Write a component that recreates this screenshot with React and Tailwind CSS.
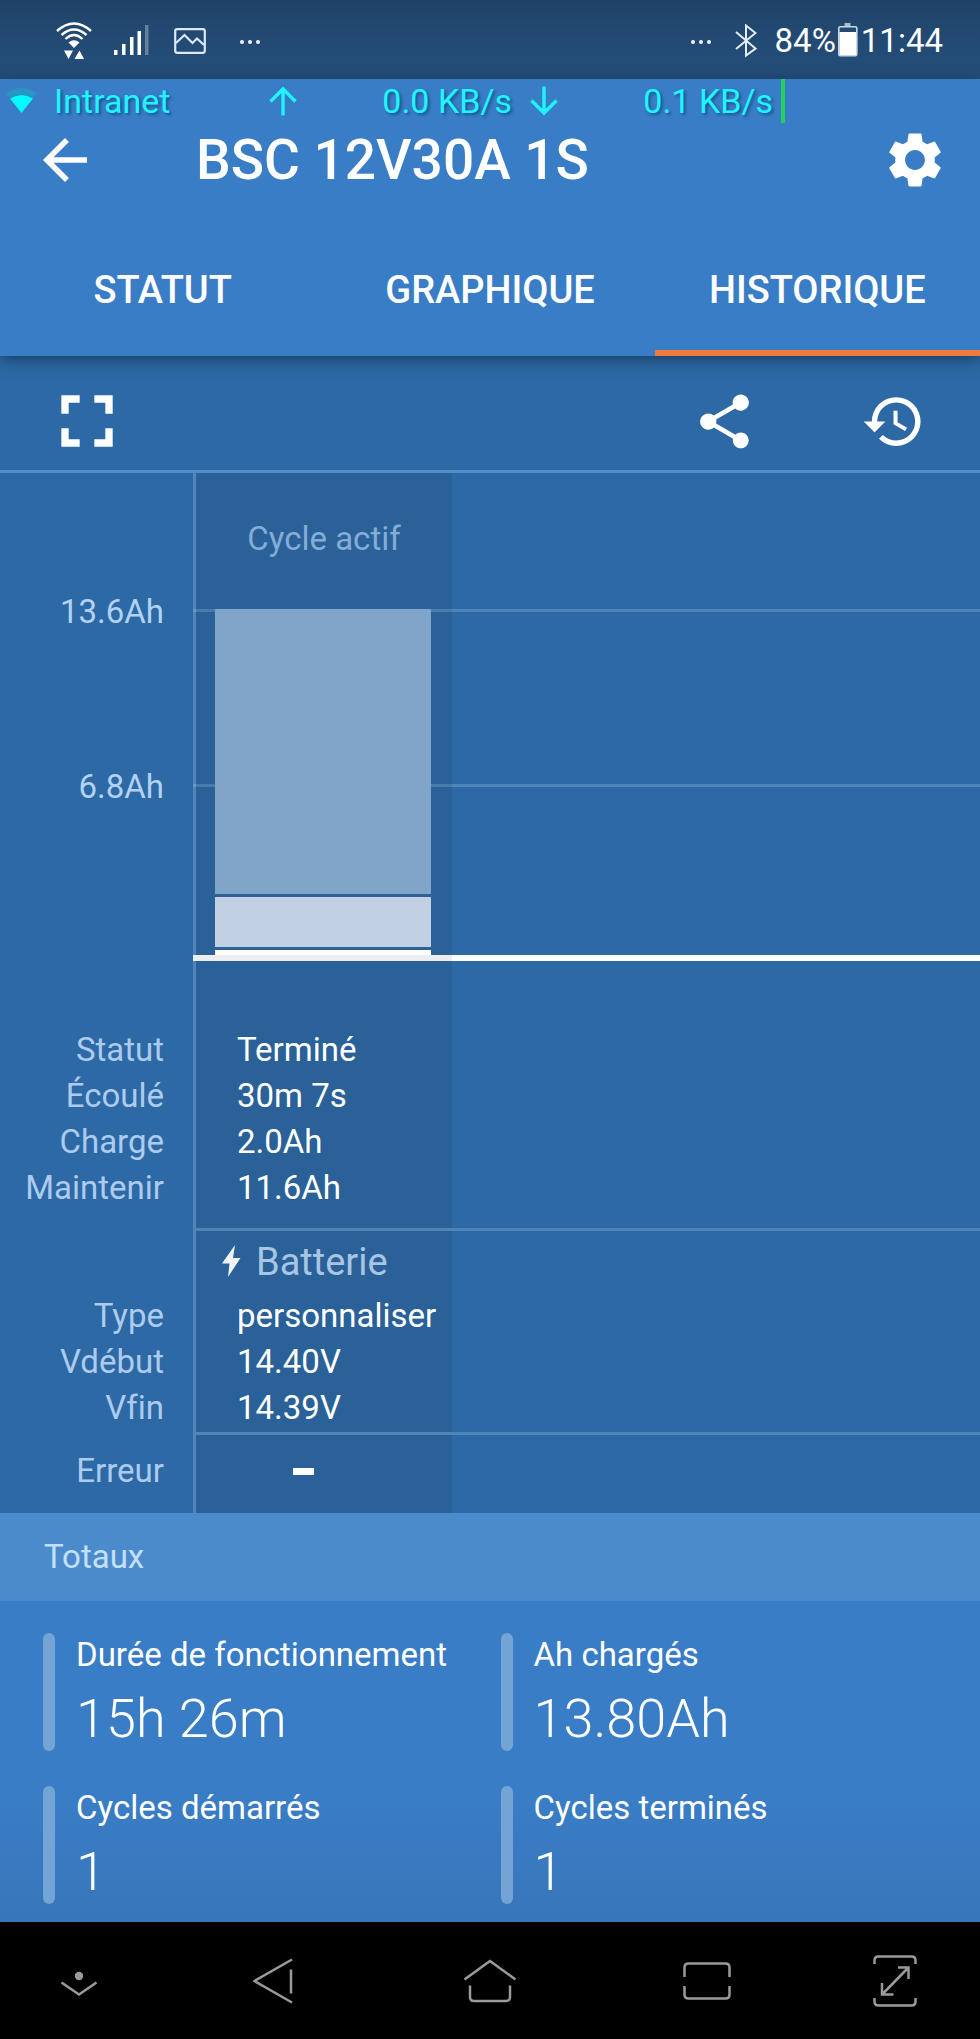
import { useState } from 'react'
import { MdArrowBack, MdFullscreen, MdHistory, MdSettings, MdShare } from 'react-icons/md'

const TABS = ['STATUT', 'GRAPHIQUE', 'HISTORIQUE']

const CYCLE_ROWS = [
  ['Statut', 'Terminé'],
  ['Écoulé', '30m 7s'],
  ['Charge', '2.0Ah'],
  ['Maintenir', '11.6Ah'],
]

const BATTERY_ROWS = [
  ['Type', 'personnaliser'],
  ['Vdébut', '14.40V'],
  ['Vfin', '14.39V'],
]

const TOTALS = [
  ['Durée de fonctionnement', '15h 26m'],
  ['Ah chargés', '13.80Ah'],
  ['Cycles démarrés', '1'],
  ['Cycles terminés', '1'],
]

function Dots() {
  return (
    <svg width="20" height="6" viewBox="0 0 20 6" fill="#eef4fa" aria-hidden>
      <circle cx="2" cy="3" r="2" />
      <circle cx="10" cy="3" r="2" />
      <circle cx="18" cy="3" r="2" />
    </svg>
  )
}

function StatusBar() {
  return (
    <div className="flex h-[79px] items-center justify-between bg-linear-to-b from-[#1f4368] via-[#224a73] to-[#244e79] pt-0.5 pr-[37px] pl-[56px] text-white">
      <div className="flex items-center">
        <svg width="36" height="38" viewBox="0 0 36 38" fill="none" stroke="#fff" strokeWidth="2.4" aria-hidden>
          <path d="M1 9Q18 -6 35 9" />
          <path d="M5.500 13Q18 2 30.500 13" />
          <path d="M9.500 17Q18 9 26.500 17" />
          <path d="M12.500 20.500Q18 16 23.500 20.500L18 26Z" fill="#fff" stroke="none" />
          <path d="M8 28.500h9l-4.500 8.500zM18.500 37h9.500l-4.500-8.500z" fill="#fff" stroke="none" />
        </svg>
        <svg className="ml-[22px]" width="35" height="32" viewBox="0 0 35 32" fill="#fff" aria-hidden>
          <rect x="0" y="25" width="3.500" height="5" />
          <rect x="8" y="19" width="3.500" height="11" />
          <rect x="16" y="12" width="3.500" height="18" />
          <rect x="23.500" y="6" width="3.500" height="24" />
          <rect x="31" y="0" width="3.500" height="30" opacity="0.3" />
        </svg>
        <svg className="ml-[25px]" width="32" height="26" viewBox="0 0 32 26" fill="none" stroke="#dbe8f8" strokeWidth="2.200" aria-hidden>
          <rect x="1.200" y="1.200" width="29.600" height="23.600" rx="2" />
          <path d="M2 15l8.500-8 8 8 4.500-4.500L30 17" />
        </svg>
        <div className="ml-[34px] pt-0.5">
          <Dots />
        </div>
      </div>
      <div className="flex items-center text-[33px] leading-[46px]">
        <div className="pt-0.5">
          <Dots />
        </div>
        <svg className="ml-[24px]" width="22" height="34" viewBox="0 0 22 34" fill="none" stroke="#e4edf8" strokeWidth="2" aria-hidden>
          <path d="M1 8L20.500 24.500 11 31.500V1.500l9.500 7.500L1 25" />
        </svg>
        <span className="ml-[18px]">84%</span>
        <svg className="ml-[2px]" width="20" height="36" viewBox="0 0 20 36" aria-hidden>
          <rect x="6.500" y="0" width="6" height="3" fill="#a9bccf" />
          <rect x="0.800" y="3.800" width="18" height="29" rx="1.500" fill="#244a70" stroke="#c9d7e6" strokeWidth="1.600" />
          <rect x="1.500" y="9" width="16.600" height="23" fill="#fff" />
        </svg>
        <span className="ml-[3px]">11:44</span>
      </div>
    </div>
  )
}

function TrafficBar() {
  return (
    <div className="flex h-[44px] items-center text-[34px] leading-[44px] text-[#1ff4ff] [text-shadow:2px_2px_3px_rgb(0_60_110/0.6)]">
      <svg className="ml-[6px]" width="31" height="26" viewBox="0 0 31 26" aria-hidden>
        <path d="M0 5.500Q15.500-5.500 31 5.500L26.500 10Q15.500 3.500 4.500 10Z" fill="#2797c6" />
        <path d="M4 10.500Q15.500 3.500 27 10.500L15.500 25Z" fill="#00fcff" />
      </svg>
      <span className="ml-[17px] w-[211px]">Intranet</span>
      <svg className="ml-1" width="28" height="30" viewBox="0 0 28 30" fill="none" stroke="currentColor" strokeWidth="3.400" aria-hidden>
        <path d="M14 29.500V3M1.500 15.500L14 3l12.500 12.500" />
      </svg>
      <span className="w-[215px] text-right">0.0 KB/s</span>
      <svg className="ml-[18px]" width="28" height="30" viewBox="0 0 28 30" fill="none" stroke="currentColor" strokeWidth="3.400" aria-hidden>
        <path d="M14 .5V27M1.500 14.500L14 27l12.500-12.500" />
      </svg>
      <span className="w-[215px] text-right">0.1 KB/s</span>
      <span className="ml-2 h-full w-1 bg-[#22d25a]" />
    </div>
  )
}

function Header({ tab, onTab }) {
  return (
    <header className="relative z-10 bg-[#397dc6] shadow-[0_3px_14px_rgb(20_50_85/0.85)]">
      <TrafficBar />
      <div className="flex h-[74px] items-center justify-between pr-8 pl-8">
        <div className="flex items-center">
          <button type="button" aria-label="Retour">
            <MdArrowBack size={66} />
          </button>
          <h1 className="ml-[98px] text-[55px] leading-[64px] font-medium">BSC 12V30A 1S</h1>
        </div>
        <button type="button" aria-label="Paramètres">
          <MdSettings size={66} />
        </button>
      </div>
      <div role="tablist" className="mt-[27px] grid grid-cols-3 gap-0.5">
        {TABS.map((name) => (
          <button
            key={name}
            type="button"
            role="tab"
            aria-selected={tab === name}
            onClick={() => onTab(name)}
            className={`h-[132px] border-y-[6px] border-t-transparent text-[38px] font-medium ${
              tab === name ? 'border-b-[#ee7a3e]' : 'border-b-transparent'
            }`}
          >
            {name}
          </button>
        ))}
      </div>
    </header>
  )
}

function Toolbar() {
  return (
    <div className="flex h-[117px] items-center justify-between border-b-[3px] border-[#528dc9] pt-4 pr-[54px] pl-[43px]">
      <button type="button" aria-label="Plein écran">
        <MdFullscreen size={88} />
      </button>
      <div className="flex items-center gap-[104px]">
        <button type="button" aria-label="Partager">
          <MdShare size={65} />
        </button>
        <button type="button" aria-label="Historique">
          <MdHistory size={65} />
        </button>
      </div>
    </div>
  )
}

function Chart() {
  return (
    <div className="flex">
      <div className="flex w-[193px] shrink-0 flex-col gap-[129px] pt-[116px] pr-[29px] text-right text-[#b2d2f5]">
        <span>13.6Ah</span>
        <span>6.8Ah</span>
      </div>
      <div className="grid flex-1">
        {/* grid lines and zero line */}
        <div className="flex flex-col pt-[136px] pb-[66px] [grid-area:1/1]">
          <div className="h-[3px] bg-[#4f84b7]" />
          <div className="mt-[172px] h-[3px] bg-[#4f84b7]" />
          <div className="mt-[168px] h-[6px] bg-white" />
        </div>
        {/* active cycle */}
        <div className="flex w-[259px] flex-col border-l-[3px] border-[#a0c8f0]/30 bg-black/7 bg-clip-padding [grid-area:1/1]">
          <div className="h-[136px] pt-[43px] text-center text-[#85acd7]">Cycle actif</div>
          <div className="ml-[19px] flex w-[216px] flex-col gap-[3px] bg-[#2d6197]">
            <div className="h-[285px] bg-[#81a4c9]" />
            <div className="h-[50px] bg-[#c1d0e3]" />
            <div className="h-[5px] bg-white" />
          </div>
        </div>
      </div>
    </div>
  )
}

function Row({ label, className, children }) {
  return (
    <tr>
      <th scope="row" className={`pr-[29px] text-right font-normal text-[#accbee] ${className}`}>
        {label}
      </th>
      <td
        className={`border-l-[3px] border-[#a0c8f0]/30 bg-black/7 bg-clip-padding pl-[41px] whitespace-nowrap ${className}`}
      >
        {children}
      </td>
      <td />
    </tr>
  )
}

function Divider() {
  return (
    <tr>
      <td />
      <td colSpan={2} className="h-[3px] bg-[#4f84b7]" />
    </tr>
  )
}

function CycleTable() {
  return (
    <table className="w-full table-fixed border-separate border-spacing-0">
      <colgroup>
        <col className="w-[193px]" />
        <col className="w-[259px]" />
        <col />
      </colgroup>
      <tbody>
        {CYCLE_ROWS.map(([label, value], i) => (
          <Row key={label} label={label} className={i === CYCLE_ROWS.length - 1 ? 'pb-[17px]' : 'pb-0'}>
            {value}
          </Row>
        ))}
        <Divider />
        <tr>
          <td />
          <th
            scope="colgroup"
            className="h-[62px] border-l-[3px] border-[#a0c8f0]/30 bg-black/7 bg-clip-padding pl-[25px] font-normal text-[#a9c5e4]"
          >
            <div className="flex items-center gap-[15px] text-[38px]">
              <svg width="20" height="34" viewBox="0 0 20 34" fill="#f0f4fa" aria-hidden>
                <path d="M14 0L1 18.500h7.500L7 32 19.500 13H12z" />
              </svg>
              Batterie
            </div>
          </th>
          <td />
        </tr>
        {BATTERY_ROWS.map(([label, value], i) => (
          <Row key={label} label={label} className={i === BATTERY_ROWS.length - 1 ? 'pb-px' : 'pb-0'}>
            {value}
          </Row>
        ))}
        <Divider />
        <Row label="Erreur" className="pt-[13px] pb-[19px]">
          <div className="ml-14 h-[7px] w-[21px] bg-white" role="img" aria-label="Aucune" />
        </Row>
      </tbody>
    </table>
  )
}

function Totals() {
  return (
    <section className="flex-1 bg-linear-to-b from-[#397dc6] from-70% to-[#3876ba]">
      <h2 className="h-[88px] bg-[#4c8bcb] pt-[21px] pl-11 text-[#c2e0fa]">Totaux</h2>
      <dl className="grid grid-cols-2 gap-y-[35px] pt-8 pr-[22px] pb-[18px] pl-[43px]">
        {TOTALS.map(([label, value]) => (
          <div key={label} className="flex gap-[21px]">
            <div className="w-3 rounded-md bg-[#74a3d6]" />
            <div>
              <dt className="leading-[44px]">{label}</dt>
              <dd className="mt-2.5 text-[54px] leading-[64px] font-light">{value}</dd>
            </div>
          </div>
        ))}
      </dl>
    </section>
  )
}

function NavBar() {
  return (
    <nav className="flex h-[117px] items-center bg-black text-[#9a9a9a]">
      <button type="button" aria-label="Masquer la barre" className="flex w-[164px] justify-center pt-1.5 pr-1.5">
        <svg width="38" height="26" viewBox="0 0 38 26" fill="none" stroke="currentColor" strokeWidth="2.500">
          <circle cx="19" cy="5" r="4.200" fill="currentColor" stroke="none" />
          <path d="M1.500 11.500L19 23.500l17.500-12" />
        </svg>
      </button>
      <button type="button" aria-label="Retour" className="flex flex-1 justify-center">
        <svg width="40" height="46" viewBox="0 0 40 46" fill="none" stroke="currentColor" strokeWidth="2.500">
          <path d="M39 1.500L1.500 23 39 44.500M38 11.500v24" />
        </svg>
      </button>
      <button type="button" aria-label="Accueil" className="flex flex-1 justify-center">
        <svg width="52" height="44" viewBox="0 0 52 44" fill="none" stroke="currentColor" strokeWidth="2.500">
          <path d="M.5 20.500L26 2l25.500 18.500M6 26.500V38q0 4 4 4h32q4 0 4-4V26.500" />
        </svg>
      </button>
      <button type="button" aria-label="Applications récentes" className="flex flex-1 justify-center">
        <svg width="48" height="38" viewBox="0 0 48 38" fill="none" stroke="currentColor" strokeWidth="2.500">
          <path d="M1.500 15V5.500q0-4 4-4h37q4 0 4 4V15M1.500 24v8.500q0 4 4 4h37q4 0 4-4V24" />
        </svg>
      </button>
      <button type="button" aria-label="Agrandir" className="flex w-[164px] justify-center pr-1.5">
        <svg width="44" height="52" viewBox="0 0 44 52" fill="none" stroke="currentColor" strokeWidth="2.500">
          <path d="M1.500 9V5.500q0-4 4-4h33q4 0 4 4V9M1.500 43v3.500q0 4 4 4h33q4 0 4-4V43" />
          <path d="M9 39.500L35.500 12.500M25 12.500h10.500V24M9 28v11.500h11.500" />
        </svg>
      </button>
    </nav>
  )
}

export default function App() {
  const [tab, setTab] = useState('HISTORIQUE')

  return (
    <div className="flex min-h-screen flex-col bg-[#2d69a4] font-['Roboto',sans-serif] text-[33px] leading-[46px] text-white [font-variant-ligatures:none]">
      <StatusBar />
      <Header tab={tab} onTab={setTab} />
      <main className="flex flex-1 flex-col">
        <Toolbar />
        <Chart />
        <CycleTable />
        <Totals />
      </main>
      <NavBar />
    </div>
  )
}
